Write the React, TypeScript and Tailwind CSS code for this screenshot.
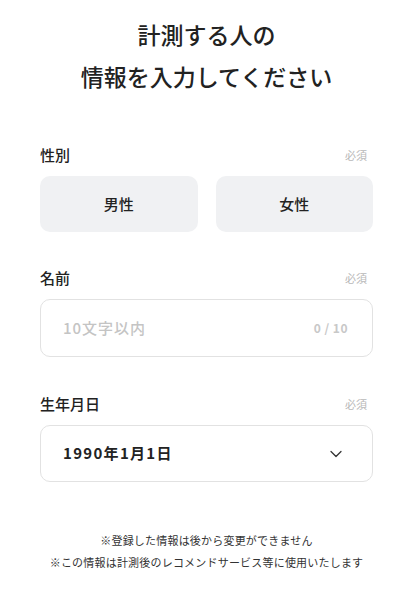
import { ChevronDown } from "lucide-react";

const font = {
  fontFamily: '"Noto Sans CJK JP", "Noto Sans", sans-serif',
};

function FieldLabel({ label }: { label: string }) {
  return (
    <div className="flex items-center justify-between h-5 mb-[11px]">
      <span className="text-[15px] font-medium text-[#222]">{label}</span>
      <span className="text-[11px] text-[#b8b8b8] pr-[6px]">必須</span>
    </div>
  );
}

export default function App() {
  return (
    <div
      className="min-h-[600px] w-[414px] bg-white pl-10 pr-[41px] pt-[13px]"
      style={font}
    >
      <h1 className="text-center text-[23px] leading-[42px] font-medium text-[#222]">
        計測する人の
        <br />
        情報を入力してください
      </h1>

      <section className="mt-[48px]">
        <FieldLabel label="性別" />
        <div className="grid grid-cols-2 gap-[18px]">
          <button className="h-14 rounded-[10px] bg-[#f0f1f3] text-[15px] font-medium text-[#222]">
            男性
          </button>
          <button className="h-14 rounded-[10px] bg-[#f0f1f3] text-[15px] font-medium text-[#222]">
            女性
          </button>
        </div>
      </section>

      <section className="mt-[36px]">
        <FieldLabel label="名前" />
        <div className="flex h-[58px] items-center justify-between rounded-[10px] border border-[#e2e2e2] pl-[22px] pr-[24px]">
          <span className="text-[15px] font-medium text-[#c4c4c4] tracking-[1px]">
            10文字以内
          </span>
          <span className="text-[12px] font-semibold text-[#c8c8c8] tracking-[0.5px]">0 / 10</span>
        </div>
      </section>

      <section className="mt-[37px]">
        <FieldLabel label="生年月日" />
        <div className="flex h-[57px] items-center justify-between rounded-[10px] border border-[#e2e2e2] pl-[22px] pr-[26px]">
          <span className="text-[15px] font-semibold text-[#222] tracking-[1.3px]">1990年1月1日</span>
          <ChevronDown className="h-5 w-5 text-[#333]" strokeWidth={1.5} />
        </div>
      </section>

      <div className="mt-[47px] text-center text-[11px] leading-[22px] text-[#333] tracking-[0.2px]">
        <p>※登録した情報は後から変更ができません</p>
        <p>※この情報は計測後のレコメンドサービス等に使用いたします</p>
      </div>
    </div>
  );
}
